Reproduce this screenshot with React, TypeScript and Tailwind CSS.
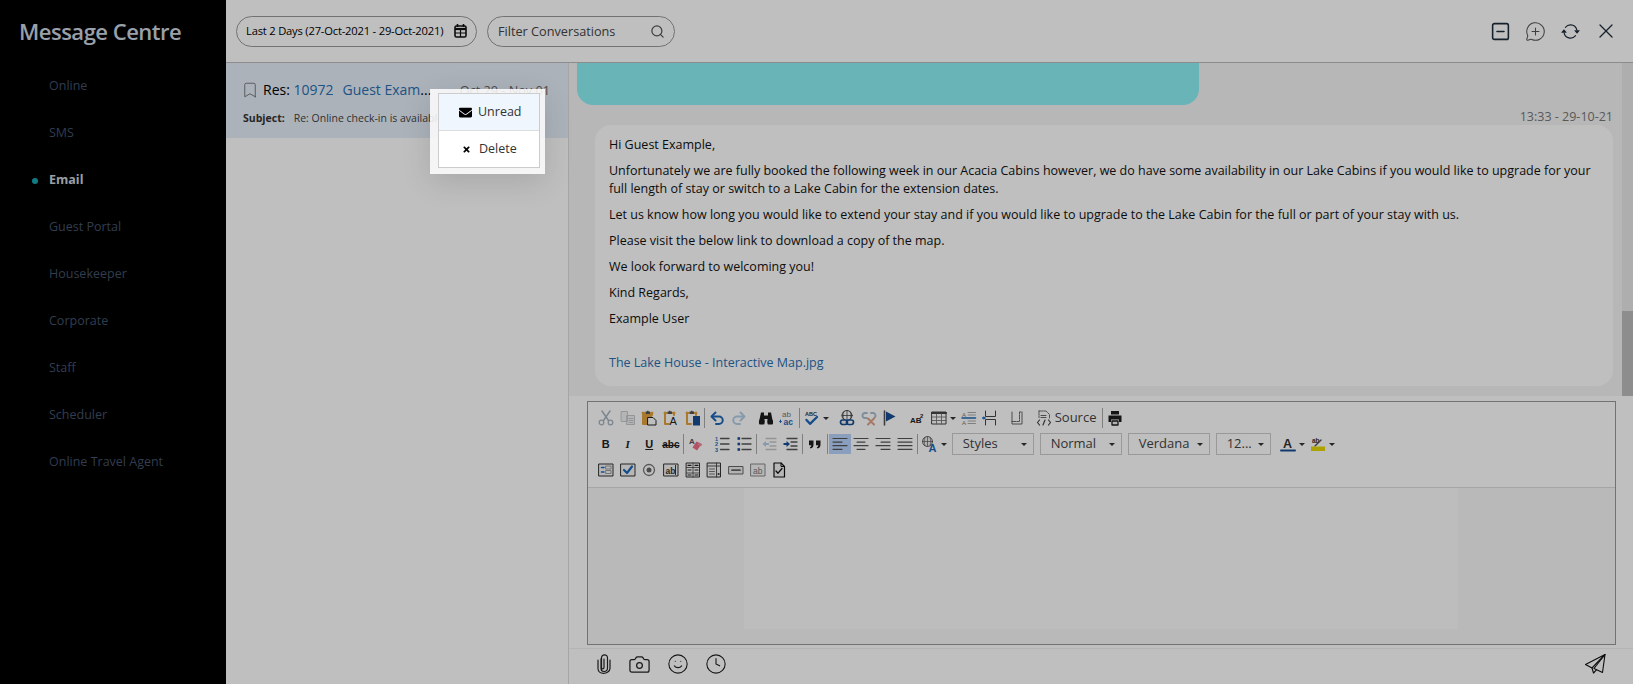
import React from 'react';
import { Bookmark, Search, SquareMinus, MessageCirclePlus, X, Camera, Smile, Clock } from 'lucide-react';
import { BsArrowRepeat } from 'react-icons/bs';
import { FaEnvelope, FaTimes } from 'react-icons/fa';

const NAV = ['Online', 'SMS', 'Email', 'Guest Portal', 'Housekeeper', 'Corporate', 'Staff', 'Scheduler', 'Online Travel Agent'];

const BLUE = '#1e69b8';
const PALE = '#b4cde6';
const BROWN = '#e2a23c';
const DARK = '#2a2a2a';

// small wrapper so the toolbar drawings below stay short
const G = ({ children }: { children: React.ReactNode }) => (
  <svg width="16" height="16" viewBox="0 0 16 16" fill="none" strokeLinecap="round" strokeLinejoin="round">
    {children}
  </svg>
);

const t = { fontFamily: "'Liberation Sans', sans-serif" };

const Clip = ({ inner }: { inner: React.ReactNode }) => (
  <G>
    <path d="M1.5 3h2M9.5 3h2M2 2.5V14h4M11 2.5V5" stroke={BROWN} strokeWidth="2" />
    <path d="M4.5 3V1.5h1.5V.8h1.5v.7H9V4H4.500z" fill="#555" />
    {inner}
  </G>
);

const Lines = ({ rows }: { rows: [number, number][] }) => (
  <G>
    {rows.map(([a, b], i) => (
      <path key={i} d={`M${a} ${2.5 + i * 3.6}H${b}`} stroke="#555" strokeWidth="1.2" />
    ))}
  </G>
);

const Framed = ({ children, c = '#333' }: { children: React.ReactNode; c?: string }) => (
  <G>
    <rect x="1" y="2" width="14" height="12" stroke={c} strokeWidth="1" fill="#f4f4f4" />
    {children}
  </G>
);

const icons: Record<string, React.ReactNode> = {
  cut: (
    <G>
      <path d="M4 1l6.500 9.500M12 1L5.500 10.500" stroke="#a9b4c0" strokeWidth="1.500" />
      <circle cx="3.500" cy="12.500" r="2.300" stroke="#a9b4c0" strokeWidth="1.300" />
      <circle cx="12.500" cy="12.500" r="2.300" stroke="#a9b4c0" strokeWidth="1.300" />
    </G>
  ),
  copy: (
    <G>
      <path d="M1.500 1.500h6v10h-6zM7 5.500h7.500v9H7z" stroke="#c4c8cc" strokeWidth="1" fill="#f2f2f2" />
      <path d="M9 8.500h4M9 10.500h4M9 12.500h4" stroke="#c4c8cc" strokeWidth="1" />
    </G>
  ),
  paste: (
    <Clip
      inner={
        <>
          <path d="M2 4h9v5H7v5H2z" fill={BROWN} />
          <path d="M7 7.500h5l3 3v4.500H7z" stroke="#222" strokeWidth="1" fill="#fff" />
        </>
      }
    />
  ),
  pasteText: (
    <Clip
      inner={
        <text x="6.500" y="15" fontSize="11" fill="#222" style={t}>
          A
        </text>
      }
    />
  ),
  pasteWord: <Clip inner={<path d="M8 6h7v9.500H8z" fill="#174f94" />} />,
  undo: (
    <G>
      <path d="M3 6.500h7a3.700 3.700 0 0 1 0 7.500H7" stroke={BLUE} strokeWidth="2" />
      <path d="M6.500 2.500L2.500 6.500l4 4" stroke={BLUE} strokeWidth="2" />
    </G>
  ),
  redo: (
    <G>
      <path d="M13 6.500H6a3.700 3.700 0 0 0 0 7.500h3" stroke={PALE} strokeWidth="2" />
      <path d="M9.500 2.500l4 4-4 4" stroke={PALE} strokeWidth="2" />
    </G>
  ),
  find: (
    <G>
      <path d="M3 2.500h3v3h4v-3h3l2 10h-5.500V9h-3v3.500H.8z" fill="#1c1c1c" />
      <rect x="1" y="10" width="5.500" height="4.500" rx="1" fill="#1c1c1c" />
      <rect x="9.500" y="10" width="5.500" height="4.500" rx="1" fill="#1c1c1c" />
    </G>
  ),
  replace: (
    <G>
      <text x="3" y="7" fontSize="8" fill="#777" style={t}>
        ab
      </text>
      <text x="4.500" y="15" fontSize="8.500" fill={BLUE} fontWeight="bold" style={t}>
        ac
      </text>
      <path d="M1.500 10v2.500M.5 11.500l1 1 1-1" stroke={BLUE} strokeWidth="1" />
    </G>
  ),
  spell: (
    <G>
      <text x="1" y="6" fontSize="5.500" fontWeight="bold" fill="#333" style={t}>
        ABC
      </text>
      <path d="M2.500 10l3.500 3.800L13 7" stroke={BLUE} strokeWidth="2.400" />
    </G>
  ),
  link: (
    <G>
      <circle cx="8" cy="5.500" r="5" stroke="#444" strokeWidth="1" />
      <path d="M3 5.500h10M8 .5v10M5 1.500c-1.500 2.500-1.500 5.500 0 8M11 1.500c1.500 2.500 1.500 5.500 0 8" stroke="#444" strokeWidth="0.800" />
      <rect x="1.500" y="10" width="7" height="4.500" rx="2.200" stroke="#174f94" strokeWidth="1.700" fill="#f0f0f0" />
      <rect x="7.500" y="10" width="7" height="4.500" rx="2.200" stroke="#174f94" strokeWidth="1.700" />
    </G>
  ),
  unlink: (
    <G>
      <path d="M6 3H4a2.500 2.500 0 0 0 0 5h1.500M10 3h2a2.500 2.500 0 0 1 1.500 4.500" stroke="#a9bccc" strokeWidth="1.800" />
      <path d="M7 8.500l6 6M13 8.500l-6 6" stroke="#e0a088" strokeWidth="2" />
    </G>
  ),
  flag: (
    <G>
      <path d="M2.500 1v14" stroke="#555" strokeWidth="1.600" />
      <path d="M4 1.500l9.500 5-9.500 5z" fill="#174f94" />
    </G>
  ),
  sup: (
    <G>
      <text x="1" y="13" fontSize="8" fontWeight="bold" fill="#222" style={t}>
        AB
      </text>
      <text x="11" y="8" fontSize="6" fontWeight="bold" fill="#222" style={t}>
        2
      </text>
    </G>
  ),
  table: (
    <G>
      <rect x="1" y="2" width="14" height="12" stroke="#444" strokeWidth="1" />
      <path d="M1 3h14" stroke="#444" strokeWidth="2" />
      <path d="M1 7h14M1 10.500h14M5.500 4v10M10.500 4v10" stroke="#777" strokeWidth="0.900" />
    </G>
  ),
  height: (
    <G>
      <text x="1" y="6.500" fontSize="6" fill="#777" style={t}>
        A
      </text>
      <text x="1" y="15" fontSize="6" fill="#777" style={t}>
        A
      </text>
      <path d="M1 8h13.500" stroke={BLUE} strokeWidth="1.500" />
      <path d="M7 2.500h7.500M7 5h7.500M7 11h7.500M7 13.500h7.500" stroke="#aaa" strokeWidth="1" />
    </G>
  ),
  hr: (
    <G>
      <path d="M3.500 1v5.500h10V1M3.500 15V9.500h10V15" stroke="#444" strokeWidth="1" />
      <path d="M.5 8H3" stroke={BLUE} strokeWidth="1.500" />
      <path d="M1.500 6L3.500 8l-2 2z" fill={BLUE} />
    </G>
  ),
  page: (
    <G>
      <path d="M3 2v12h10V2" stroke="#666" strokeWidth="1" />
      <path d="M3 11.500h7.500V2M10.500 2H13" stroke="#666" strokeWidth="1" strokeDasharray="1.500 1" />
    </G>
  ),
  source: (
    <G>
      <path d="M3 1h7l3.500 3.500V8M3 1v7" stroke="#666" strokeWidth="1" strokeDasharray="1.500 1" />
      <path d="M5 5.500h5M5 7.500h5" stroke="#666" strokeWidth="1" />
      <path d="M3.500 10l-2 2.500 2 2.500M12.500 10l2 2.500-2 2.500M9 10l-2 5" stroke="#444" strokeWidth="1.200" />
    </G>
  ),
  print: (
    <G>
      <path d="M4 1h8v3.500H4zM1.500 5.500h13v6.500H12V9.500H4V12H1.500z" fill="#1c1c1c" />
      <path d="M5 11h6v4H5z" stroke="#1c1c1c" strokeWidth="1.300" fill="#eee" />
    </G>
  ),
  eraser: (
    <G>
      <text x="1" y="7.500" fontSize="8" fontWeight="bold" fill="#555" style={t}>
        A
      </text>
      <path d="M8.500 5.500l5 2.500-4.500 6.500-4.500-3z" fill="#ee6e86" />
      <path d="M11 6.500l3.300 1.700-1.500 2.400-3.200-2z" fill="#f08ea0" />
    </G>
  ),
  ol: (
    <G>
      <path d="M6.500 2.500h8.500M6.500 8h8.500M6.500 13.500h8.500" stroke="#555" strokeWidth="1.300" />
      <text x="1" y="5" fontSize="5.500" fontWeight="bold" fill={BLUE} style={t}>
        1
      </text>
      <text x="1" y="10" fontSize="5.500" fontWeight="bold" fill={BLUE} style={t}>
        2
      </text>
      <text x="1" y="15.500" fontSize="5.500" fontWeight="bold" fill={BLUE} style={t}>
        3
      </text>
    </G>
  ),
  ul: (
    <G>
      <path d="M6 2.500h9M6 8h9M6 13.500h9" stroke="#555" strokeWidth="1.300" />
      <rect x="1.500" y="1.200" width="2.600" height="2.600" fill="#174f94" />
      <rect x="1.500" y="6.700" width="2.600" height="2.600" fill="#174f94" />
      <rect x="1.500" y="12.200" width="2.600" height="2.600" fill="#174f94" />
    </G>
  ),
  outdent: (
    <G>
      <path d="M1.500 8l3.500-3v2h3v2H5v2z" fill={PALE} />
      <path d="M5 2.500h10M9 6h6M9 10h6M5 13.500h10" stroke="#c6c6c6" strokeWidth="1.300" />
    </G>
  ),
  indent: (
    <G>
      <path d="M8 8L4.500 5v2h-3v2h3v2z" fill="#174f94" />
      <path d="M5 2.500h10M9 6h6M9 10h6M5 13.500h10" stroke="#555" strokeWidth="1.300" />
    </G>
  ),
  quote: (
    <G>
      <path d="M2 4.500h4.500v4c0 2.200-1 3.500-3 4l-.7-1.200c1-.4 1.500-1 1.500-2H2zM9 4.500h4.500v4c0 2.200-1 3.500-3 4l-.7-1.200c1-.4 1.500-1 1.500-2H9z" fill="#1c1c1c" />
    </G>
  ),
  left: <Lines rows={[[1, 15], [1, 10], [1, 15], [1, 10]]} />,
  center: <Lines rows={[[1, 15], [4, 12], [1, 15], [4, 12]]} />,
  right: <Lines rows={[[1, 15], [6, 15], [1, 15], [6, 15]]} />,
  justify: <Lines rows={[[1, 15], [1, 15], [1, 15], [1, 15]]} />,
  lang: (
    <G>
      <circle cx="5.500" cy="5.500" r="5" stroke="#555" strokeWidth="0.900" fill="#eee" />
      <path d="M.5 5.500h10M5.500.5v10M3 1.500c-1.200 2.500-1.200 5.500 0 8M8 1.500c1.200 2.500 1.200 5.500 0 8" stroke="#555" strokeWidth="0.700" />
      <text x="6.500" y="15.500" fontSize="11" fontWeight="bold" fill={BLUE} style={t}>
        A
      </text>
    </G>
  ),
  color: (
    <G>
      <text x="3" y="12" fontSize="12.500" fontWeight="bold" fill="#333" style={t}>
        A
      </text>
      <path d="M1 14.500h14" stroke="#174f94" strokeWidth="2" />
    </G>
  ),
  bg: (
    <G>
      <text x="2" y="6.500" fontSize="6.500" fontWeight="bold" fill="#333" style={t}>
        ab
      </text>
      <path d="M5 10l6-6" stroke="#555" strokeWidth="1.400" />
      <path d="M1 10.500h14V15H1z" fill="#e8d800" />
    </G>
  ),
  form: (
    <Framed>
      <path d="M3.500 5.500H6M3.500 10H6" stroke={BLUE} strokeWidth="1.500" />
      <rect x="8" y="4" width="5" height="3" stroke="#888" strokeWidth="0.800" />
      <rect x="8" y="8.500" width="5" height="3" stroke="#888" strokeWidth="0.800" />
    </Framed>
  ),
  check: (
    <Framed>
      <path d="M4 8l3 3 5-6.500" stroke={BLUE} strokeWidth="2.200" />
    </Framed>
  ),
  radio: (
    <G>
      <circle cx="8" cy="8" r="5.500" stroke="#777" strokeWidth="1.300" />
      <circle cx="8" cy="8" r="2.500" fill="#666" />
    </G>
  ),
  input: (
    <Framed>
      <text x="2.500" y="11.500" fontSize="8.500" fontWeight="bold" fill="#333" style={t}>
        ab
      </text>
      <path d="M12.500 3.500v9" stroke="#333" strokeWidth="1" />
    </Framed>
  ),
  area: (
    <G>
      <rect x="1.500" y="1" width="13" height="14" stroke="#333" strokeWidth="1" fill="#f4f4f4" />
      <path d="M1.500 11h13M8 1v14M1.500 5.500h13" stroke="#444" strokeWidth="0.800" />
      <path d="M3 3.300h3M10 3.300h3M3 8h3M10 8h3M3 13h3M10 13h3" stroke="#222" strokeWidth="1.200" />
    </G>
  ),
  select: (
    <G>
      <rect x="1.500" y="1" width="13" height="14" stroke="#333" strokeWidth="1" fill="#f4f4f4" />
      <path d="M10.500 1v14M1.500 4h13" stroke="#444" strokeWidth="0.900" />
      <path d="M3.500 7h5M3.500 9.500h5M3.500 12h5" stroke="#777" strokeWidth="1" />
      <rect x="11.700" y="11" width="1.800" height="2" fill="#444" />
    </G>
  ),
  button: (
    <G>
      <rect x="1" y="4.500" width="14" height="7.500" stroke="#666" strokeWidth="1" fill="#eee" />
      <path d="M4 8.200h8" stroke="#666" strokeWidth="1.800" strokeDasharray="1.500 .7" />
    </G>
  ),
  image: (
    <Framed c="#888">
      <text x="3" y="11.500" fontSize="8.500" fill="#777" style={t}>
        ab
      </text>
    </Framed>
  ),
  hidden: (
    <G>
      <path d="M3 1h7l3.500 3.500V15H3z" stroke="#111" strokeWidth="1.200" fill="#f4f4f4" />
      <path d="M10 1v3.500h3.500" stroke="#111" strokeWidth="1" />
      <path d="M5 9l2 2.200 4-4.700" stroke="#111" strokeWidth="1.300" />
    </G>
  ),
};

const Sep = () => <span className="mx-[1px] h-[20px] w-px shrink-0 bg-[#aaa]" />;
const Gap = () => <span className="w-[5px] shrink-0" />;

const Tool = ({ name, active = false, caret = false }: { name: string; active?: boolean; caret?: boolean }) => (
  <span className={`flex h-[20px] shrink-0 items-center justify-center ${caret ? 'w-[30px] justify-start pl-[3px]' : 'w-[21.700px]'} ${active ? 'bg-[#b8d4fd]' : ''}`}>
    {icons[name]}
    {caret && <span className="ml-[3px] h-0 w-0 border-x-[3px] border-t-[3px] border-x-transparent border-t-[#333]" />}
  </span>
);

const Glyph = ({ children, cls }: { children: React.ReactNode; cls: string }) => (
  <span className={`flex h-[20px] w-[21.700px] shrink-0 items-center justify-center text-[#222] [font-family:'Liberation_Sans',sans-serif] ${cls}`}>{children}</span>
);

const Combo = ({ label, w }: { label: string; w: string }) => (
  <span className={`mx-[3px] flex h-[22px] shrink-0 items-center justify-between border border-[#ccc] pr-[6px] pl-[10px] text-[13px] text-[#444] ${w}`}>
    {label}
    <span className="h-0 w-0 border-x-[3px] border-t-[3px] border-x-transparent border-t-[#333]" />
  </span>
);

const CalendarGlyph = () => (
  <svg width="13" height="14" viewBox="0 0 13 14" fill="none">
    <path d="M3.500 0v3M9.500 0v3" stroke="#111" strokeWidth="1.600" />
    <rect x="1" y="2" width="11" height="11" rx="1.500" stroke="#111" strokeWidth="1.600" />
    <path d="M1 5h11" stroke="#111" strokeWidth="2.200" />
    <path d="M1 9h11M6.500 5v8" stroke="#111" strokeWidth="1.200" />
  </svg>
);

const PaperClipGlyph = () => (
  <svg width="14" height="20" viewBox="0 0 14 20" fill="none" stroke="#222" strokeWidth="1.200" strokeLinecap="round">
    <path d="M4 4.500v10c0 1.800 1.200 3 3 3s3.500-1.200 3.500-3.500V4c0-2-1.200-3.200-3-3.200S4.500 2 4.500 4v9.500c0 .8.600 1.300 1.300 1.300s1.200-.5 1.200-1.300V5" />
    <path d="M1 6v8.500C1 17.500 3.500 19.300 6.500 19.300s6.500-2 6.500-5V6" />
  </svg>
);

const PlaneGlyph = () => (
  <svg width="21" height="20" viewBox="0 0 21 20" fill="none" stroke="#111" strokeWidth="1.100" strokeLinejoin="round">
    <path d="M20 .5L.5 10.500 7 14z" />
    <path d="M20 .5L17.500 18.500 9 14.500z" />
    <path d="M7 14l1.500 5 3-3.200" />
  </svg>
);

export default function App() {
  return (
    <div className="relative flex h-[684px] w-[1633px] overflow-hidden bg-white text-black [font-family:'Open_Sans',sans-serif]">
      <aside className="w-[226px] shrink-0 bg-black">
        <h1 className="mt-[16px] pl-[19px] text-[22px] leading-[31px] font-semibold tracking-[-0.5px] text-[#ccd6e0]">Message Centre</h1>
        <nav className="mt-[16px] flex flex-col">
          {NAV.map((n) => (
            <div key={n} className="relative flex h-[47px] items-center pl-[49px] text-[12.500px]">
              {n === 'Email' ? (
                <>
                  <span className="absolute left-[32px] h-[6px] w-[6px] rounded-full bg-[#14a5b0]" />
                  <span className="font-bold text-[#cdd5dd]">{n}</span>
                </>
              ) : (
                <span className="text-[#42526a]">{n}</span>
              )}
            </div>
          ))}
        </nav>
      </aside>

      <main className="flex min-w-0 flex-1 flex-col">
        <header className="flex h-[63px] shrink-0 items-center border-b border-[#bbb] pr-[10px] pl-[10px]">
          <div className="flex h-[31px] w-[241px] items-center justify-between rounded-full border border-[#999] pr-[9px] pl-[9px] text-[11.200px] tracking-[-0.2px]">
            Last 2 Days (27-Oct-2021 - 29-Oct-2021)
            <CalendarGlyph />
          </div>
          <div className="ml-[10px] flex h-[31px] w-[188px] items-center justify-between rounded-full border border-[#999] pt-[2px] pr-[9px] pl-[10px] text-[12.700px] text-[#444]">
            Filter Conversations
            <Search size={15} className="-mt-[2px] text-[#555]" />
          </div>
          <div className="ml-auto flex items-center text-[#1c2b3a]">
            <span className="flex w-[35px] justify-center"><SquareMinus size={21} strokeWidth={1.800} /></span>
            <span className="flex w-[35px] justify-center"><MessageCirclePlus size={21} strokeWidth={1.200} className="text-[#555]" /></span>
            <span className="flex w-[35px] justify-center"><BsArrowRepeat size={19} /></span>
            <span className="flex w-[35px] justify-center"><X size={24} strokeWidth={1.300} /></span>
          </div>
        </header>

        <div className="flex min-h-0 flex-1">
          <section className="w-[343px] shrink-0 border-r border-[#ddd]">
            <div className="h-[75px] bg-[#e6eef8] pt-[16px] pr-[18px] pl-[17px]">
              <div className="flex items-center text-[14px] leading-[22px]">
                <Bookmark size={18} strokeWidth={1} className="mr-[4px] -ml-[2px] text-[#555]" />
                <span>Res:&nbsp;</span>
                <span className="text-[#2a6fb0]">10972</span>
                <span className="ml-[9px] text-[#2a6fb0]">Guest Exam</span>
                <span>...</span>
                <span className="ml-auto text-[12.700px] text-[#666]">Oct 29 - Nov 01</span>
              </div>
              <div className="mt-[9px] text-[10.500px] leading-[16px]">
                <span className="font-bold text-[#333]">Subject:</span>
                <span className="ml-[9px] text-[#444]">Re: Online check-in is available</span>
              </div>
            </div>
          </section>

          <section className="flex min-w-0 flex-1 flex-col">
            <div className="flex h-[333px] shrink-0 bg-[#f5f5f5]">
              <div className="min-w-0 flex-1 overflow-hidden pr-[9px]">
                <div className="ml-[8px] h-[42px] w-[622px] rounded-b-[16px] bg-[#8df0f5]" />
                <div className="mt-[4px] text-right text-[12.500px] leading-[16px] text-[#777]">13:33 - 29-10-21</div>
                <div className="mt-[0px] ml-[26px] h-[261px] rounded-[16px] bg-white px-[14px] pt-[11px] text-[12.500px] leading-[18px] text-[#111]">
                  <p>Hi Guest Example,</p>
                  <p className="mt-[8px]">Unfortunately we are fully booked the following week in our Acacia Cabins however, we do have some availability in our Lake Cabins if you would like to upgrade for your full length of stay or switch to a Lake Cabin for the extension dates.</p>
                  <p className="mt-[8px]">Let us know how long you would like to extend your stay and if you would like to upgrade to the Lake Cabin for the full or part of your stay with us.</p>
                  <p className="mt-[8px]">Please visit the below link to download a copy of the map.</p>
                  <p className="mt-[8px]">We look forward to welcoming you!</p>
                  <p className="mt-[8px]">Kind Regards,</p>
                  <p className="mt-[8px]">Example User</p>
                  <p className="mt-[26px] text-[#2a6fb0]">The Lake House - Interactive Map.jpg</p>
                </div>
              </div>
              <div className="flex w-[11px] shrink-0 flex-col justify-end bg-[#e8e8e8]">
                <div className="h-[85px] bg-[#bcbcbc]" />
              </div>
            </div>

            <div className="mt-[5px] ml-[18px] flex h-[244px] w-[1029px] shrink-0 flex-col border border-[#999]">
              <div className="flex h-[86px] shrink-0 flex-col border-b border-[#ddd] pt-[3px] pl-[7px]">
                <div className="flex h-[26px] items-center">
                  <Tool name="cut" />
                  <Tool name="copy" />
                  <Tool name="paste" />
                  <Tool name="pasteText" />
                  <Tool name="pasteWord" />
                  <Sep />
                  <Tool name="undo" />
                  <Tool name="redo" />
                  <Gap />
                  <Tool name="find" />
                  <Tool name="replace" />
                  <Sep />
                  <Tool name="spell" caret />
                  <Gap />
                  <Tool name="link" />
                  <Tool name="unlink" />
                  <Tool name="flag" />
                  <Gap />
                  <Tool name="sup" />
                  <Tool name="table" caret />
                  <Tool name="height" />
                  <Tool name="hr" />
                  <Gap />
                  <Tool name="page" />
                  <Gap />
                  <Tool name="source" />
                  <span className="text-[13px] text-[#444]">Source</span>
                  <span className="w-[5px]" />
                  <Sep />
                  <Tool name="print" />
                </div>
                <div className="flex h-[26px] items-center">
                  <Glyph cls="text-[11px] font-bold">B</Glyph>
                  <Glyph cls="text-[11px] font-bold italic [font-family:'Liberation_Serif',serif]">I</Glyph>
                  <Glyph cls="text-[11px] font-bold underline">U</Glyph>
                  <Glyph cls="text-[10px] font-bold line-through">abc</Glyph>
                  <Sep />
                  <Tool name="eraser" />
                  <Gap />
                  <Tool name="ol" />
                  <Tool name="ul" />
                  <Sep />
                  <Tool name="outdent" />
                  <Tool name="indent" />
                  <Sep />
                  <Tool name="quote" />
                  <Sep />
                  <Tool name="left" active />
                  <Tool name="center" />
                  <Tool name="right" />
                  <Tool name="justify" />
                  <Sep />
                  <Tool name="lang" caret />
                  <Combo label="Styles" w="w-[82px]" />
                  <Combo label="Normal" w="w-[82px]" />
                  <Combo label="Verdana" w="w-[82px]" />
                  <Combo label="12..." w="w-[55px]" />
                  <span className="w-[3px]" />
                  <Tool name="color" caret />
                  <Tool name="bg" caret />
                </div>
                <div className="flex h-[26px] items-center">
                  <Tool name="form" />
                  <Tool name="check" />
                  <Tool name="radio" />
                  <Tool name="input" />
                  <Tool name="area" />
                  <Tool name="select" />
                  <Tool name="button" />
                  <Tool name="image" />
                  <Tool name="hidden" />
                </div>
              </div>
              <div className="min-h-0 flex-1 bg-[#f7f7f7] pl-[156px]">
                <div className="h-[141px] w-[714px] bg-[#fdfdfd]" />
              </div>
            </div>

            <div className="mt-[3px] flex flex-1 items-center border-t border-[#f0f0f0] pr-[27px] pb-[5px] pl-[28px] text-[#222]">
              <PaperClipGlyph />
              <Camera size={23} strokeWidth={1.300} className="ml-[17px]" />
              <Smile size={22} strokeWidth={1.200} className="ml-[16px]" />
              <Clock size={22} strokeWidth={1.200} className="ml-[16px]" />
              <span className="ml-auto"><PlaneGlyph /></span>
            </div>
          </section>
        </div>
      </main>

      <div className="absolute inset-0 bg-black/25" />

      <div className="absolute top-[89px] left-[430px] w-[115px] bg-white/85 pt-[4px] pr-[5px] pb-[6px] pl-[8px] text-[12.500px] text-[#333] shadow-[0_8px_30px_rgba(0,0,0,0.12)]">
        <div className="border border-[#ccc] bg-white">
          <div className="flex h-[37px] items-center border-b border-[#ddd] bg-[#eff6fd] pl-[20px]">
            <FaEnvelope size={13} className="mr-[6px] text-black" /> Unread
          </div>
          <div className="flex h-[36px] items-center pl-[23px]">
            <FaTimes size={9} className="mr-[8px] text-black" /> Delete
          </div>
        </div>
      </div>
    </div>
  );
}
